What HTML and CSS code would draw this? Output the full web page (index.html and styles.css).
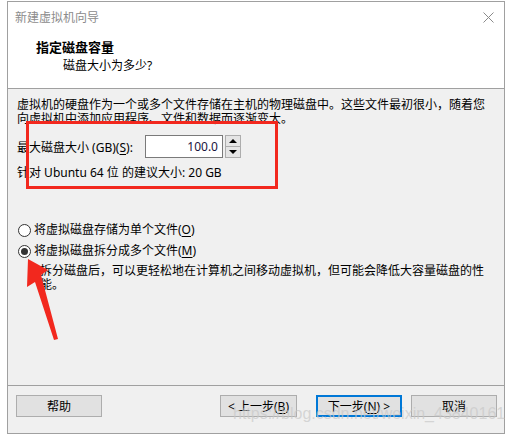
FILE: index.html
```html
<!DOCTYPE html>
<html>
<head>
    <meta name="viewport" content="width=device-width, initial-scale=1.0">
    <title>新建虚拟机向导</title>
    <link rel="stylesheet" href="styles.css">
</head>
<body>
    <div class="window">
        <!-- Title bar -->
        <div class="titlebar">
            <span class="title">新建虚拟机向导</span>
            <svg class="close" width="11" height="11" viewBox="0 0 11 11">
                <path d="M0.5 0.5 L10.5 10.5 M10.5 0.5 L0.5 10.5" stroke="#8a8a8a" stroke-width="1" fill="none"/>
            </svg>
        </div>

        <!-- Header -->
        <div class="header">
            <h1>指定磁盘容量</h1>
            <p>磁盘大小为多少?</p>
        </div>

        <!-- Body -->
        <div class="content">
            <p class="intro">虚拟机的硬盘作为一个或多个文件存储在主机的物理磁盘中。这些文件最初很小，随着您向虚拟机中添加应用程序、文件和数据而逐渐变大。</p>

            <div class="size-row">
                <label>最大磁盘大小 (GB)(<u>S</u>):</label>
                <div class="spin">
                    <input type="text" value="100.0">
                    <div class="spin-btns">
                        <div class="spin-btn"><span class="tri-up"></span></div>
                        <div class="spin-btn"><span class="tri-down"></span></div>
                    </div>
                </div>
            </div>
            <p class="suggest">针对 Ubuntu 64 位 的建议大小: 20 GB</p>

            <div class="options">
                <div class="radio"><span class="dot"></span>将虚拟磁盘存储为单个文件(<u>O</u>)</div>
                <div class="radio"><span class="dot checked"></span>将虚拟磁盘拆分成多个文件(<u>M</u>)</div>
                <p class="desc">拆分磁盘后，可以更轻松地在计算机之间移动虚拟机，但可能会降低大容量磁盘的性能。</p>
            </div>
        </div>

        <!-- Buttons -->
        <div class="footer">
            <button class="btn">帮助</button>
            <div class="spacer"></div>
            <button class="btn back">&lt; 上一步(<u>B</u>)</button>
            <button class="btn next">下一步(<u>N</u>) &gt;</button>
            <button class="btn">取消</button>
        </div>

        <!-- annotations drawn over the screenshot -->
        <div class="red-box"></div>
        <svg class="arrow" width="40" height="90" viewBox="20 255 40 90">
            <polygon points="28,258 48,269 41,274 58,338 54,339 35,281 27,286" fill="#f2281e"/>
        </svg>
        <div class="watermark">https://blog.csdn.net/weixin_43840161</div>
    </div>
</body>
</html>
```

FILE: styles.css
```css
body {
    margin: 0;
    font-family: "Noto Sans", "Noto Sans CJK SC", sans-serif;
    font-size: 12px;
    color: #000;
    background: #fff;
}

.window {
    position: relative;
    margin: 1px 0 0 7px;
    width: 496px;
    height: 431px;
    border: 1px solid #a0a0a0;
    display: flex;
    flex-direction: column;
    background: #f0f0f0;
}

/* title bar + header share the white strip */
.titlebar {
    background: #fff;
    height: 30px;
    display: flex;
    align-items: center;
    justify-content: space-between;
    padding: 0 8px 0 7px;
}

.title {
    color: #8c8c8c;
    font-size: 12px;
}

.close {
    margin-right: 2px;
}

.header {
    background: #fff;
    height: 56px;
    padding-left: 28px;
    border-bottom: 1px solid #a0a0a0;
}

.header h1 {
    margin: 7px 0 0 0;
    font-size: 13px;
    font-weight: bold;
    line-height: 17px;
}

.header p {
    margin: 2px 0 0 27px;
    line-height: 15px;
}

.content {
    flex: 1;
    padding: 9px 15px 0 9px;
}

.intro {
    margin: 0;
    line-height: 14px;
}

.size-row {
    display: flex;
    align-items: center;
    margin-top: 9px;
}

.size-row label {
    width: 128px;
}

.spin {
    display: flex;
    gap: 2px;
}

.spin input {
    width: 72px;
    height: 21px;
    border: 1px solid #7a7a7a;
    padding: 0 4px 0 0;
    text-align: right;
    font-family: "Noto Sans", sans-serif;
    font-size: 12px;
    color: #1b1340;
    background: #fff;
}

.spin-btns {
    display: flex;
    flex-direction: column;
    border: 1px solid #adadad;
    width: 14px;
    height: 21px;
}

.spin-btn {
    flex: 1;
    background: #e5e5e5;
    display: flex;
    align-items: center;
    justify-content: center;
}

.spin-btn + .spin-btn {
    border-top: 1px solid #adadad;
}

.tri-up {
    border-left: 4px solid transparent;
    border-right: 4px solid transparent;
    border-bottom: 4px solid #000;
}

.tri-down {
    border-left: 4px solid transparent;
    border-right: 4px solid transparent;
    border-top: 4px solid #000;
}

.suggest {
    margin: 8px 0 0 0;
    line-height: 14px;
}

.options {
    margin-top: 42px;
}

.radio {
    display: flex;
    align-items: center;
    line-height: 16px;
    margin-bottom: 5px;
}

.dot {
    width: 11px;
    height: 11px;
    border: 1px solid #333;
    border-radius: 50%;
    background: #fff;
    margin: 0 3px 0 1px;
    position: relative;
}

.dot.checked::after {
    content: "";
    position: absolute;
    left: 2px;
    top: 2px;
    width: 7px;
    height: 7px;
    border-radius: 50%;
    background: #333;
}

u {
    text-decoration-thickness: 1px;
    text-underline-offset: 2px;
}

.desc {
    margin: 3px 0 0 23px;
    width: 450px;
    line-height: 14px;
}

.footer {
    height: 38px;
    border-top: 1px solid #a0a0a0;
    display: flex;
    align-items: flex-start;
    padding: 9px 7px 0 8px;
}

.spacer {
    flex: 1;
}

.btn {
    width: 86px;
    height: 22px;
    background: #e1e1e1;
    border: 1px solid #adadad;
    font-family: "Noto Sans", "Noto Sans CJK SC", sans-serif;
    font-size: 12px;
    padding: 0;
    color: #000;
}

.back {
    width: 77px;
    margin-right: 19px;
}

.next {
    border: 2px solid #0078d7;
    margin-right: 9px;
}

.red-box {
    position: absolute;
    left: 18px;
    top: 119px;
    width: 246px;
    height: 62px;
    border: 3px solid #f2281e;
}

.arrow {
    position: absolute;
    left: 12px;
    top: 254px;
}

.watermark {
    position: absolute;
    left: 225px;
    top: 403px;
    font-family: "Liberation Sans", sans-serif;
    font-size: 16px;
    color: rgba(200, 200, 200, 0.7);
    white-space: nowrap;
}
```
